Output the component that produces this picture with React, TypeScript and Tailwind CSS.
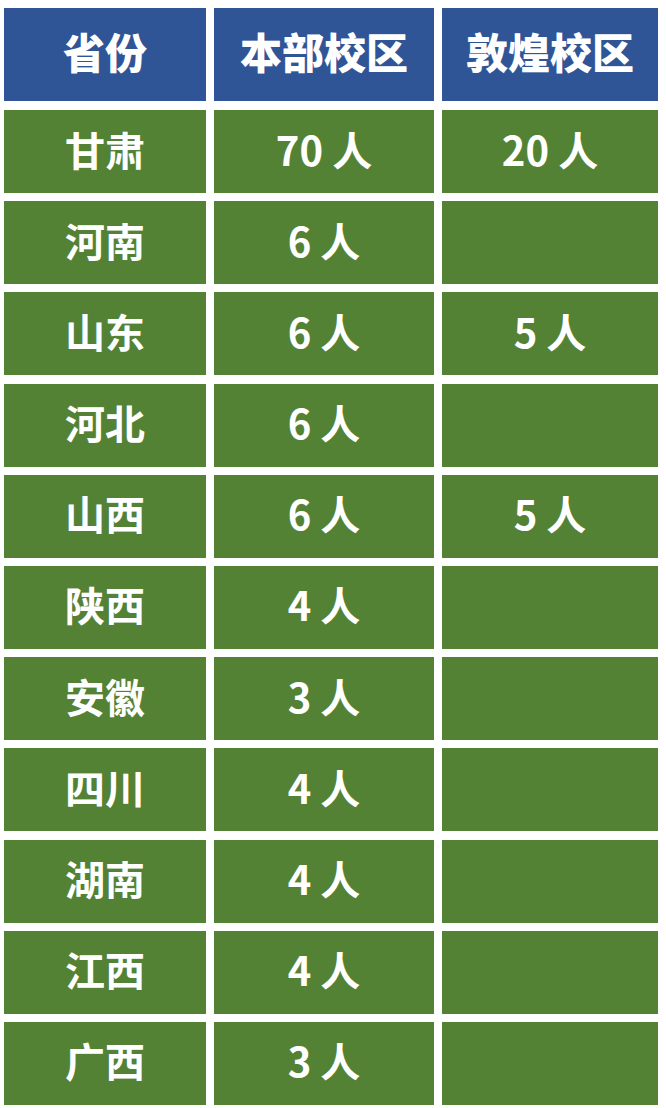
import { Fragment } from "react";

const rows: [string, string, string][] = [
  ["甘肃", "70 人", "20 人"],
  ["河南", "6 人", ""],
  ["山东", "6 人", "5 人"],
  ["河北", "6 人", ""],
  ["山西", "6 人", "5 人"],
  ["陕西", "4 人", ""],
  ["安徽", "3 人", ""],
  ["四川", "4 人", ""],
  ["湖南", "4 人", ""],
  ["江西", "4 人", ""],
  ["广西", "3 人", ""],
];

const headers = ["省份", "本部校区", "敦煌校区"];

const cols = "grid grid-cols-[202px_220px_216px] gap-x-[8px]";
const cell =
  "flex h-[83px] items-center justify-center bg-[#548235] pb-[6px] text-[40px] font-bold leading-none";

export default function App() {
  return (
    <div
      className="w-[666px] h-[1108px] bg-white pl-[4px] pr-[8px] pt-[8px] text-white"
      style={{ fontFamily: '"Noto Sans CJK SC", "Noto Sans", sans-serif' }}
    >
      <div className={cols}>
        {headers.map((h) => (
          <div
            key={h}
            className="flex h-[93px] items-center justify-center bg-[#2f5597] pb-[8px] text-[42px] font-black leading-none"
          >
            {h}
          </div>
        ))}
      </div>
      <div className={`${cols} mt-[9px] gap-y-[8.2px]`}>
        {rows.map(([prov, main, dh]) => (
          <Fragment key={prov}>
            <div className={cell}>{prov}</div>
            <div className={cell}>{main}</div>
            <div className={cell}>{dh}</div>
          </Fragment>
        ))}
      </div>
    </div>
  );
}
